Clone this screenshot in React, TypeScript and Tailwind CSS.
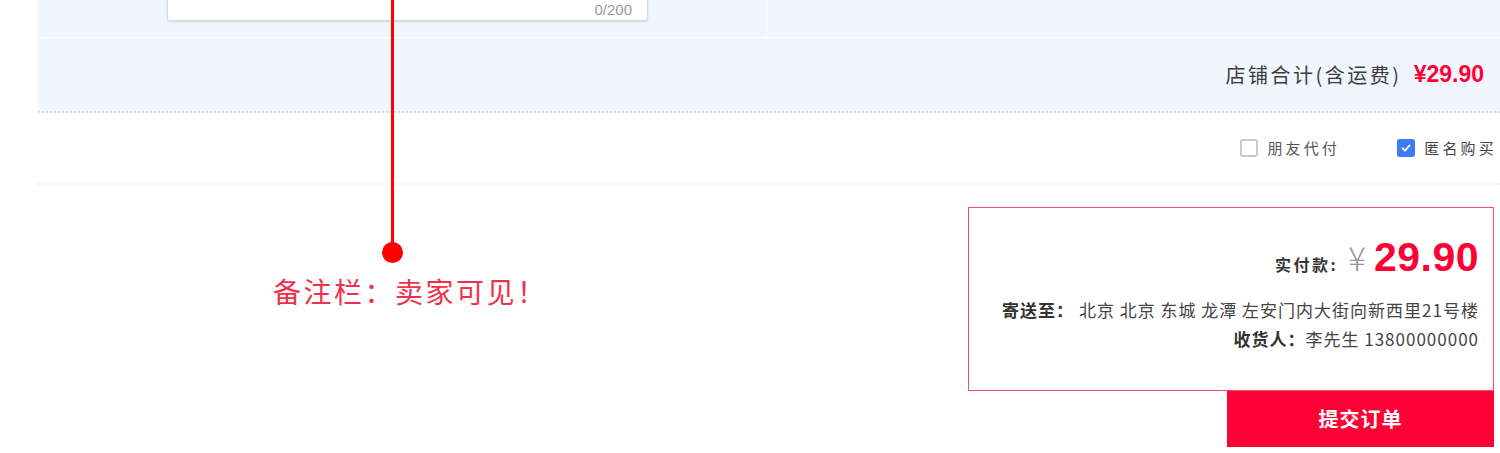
import React from "react";

const cjk = { fontFamily: '"Noto Sans CJK SC", "Noto Sans", sans-serif' };
const latin = { fontFamily: '"Liberation Sans", Arial, sans-serif' };

export default function App() {
  return (
    <div className="relative w-[1500px] h-[453px] overflow-hidden bg-white" style={cjk}>
      <div className="ml-[38px]">
        {/* top row with textarea (cut off at top) */}
        <div className="flex h-[37px] bg-[#f0f5fe] overflow-hidden">
          <div className="w-[729px] border-r border-[#fbfdff] flex items-end pb-[16px]">
            <div className="ml-[129px] w-[481px] h-[80px] bg-white border border-[#d9d9d9] rounded-[3px] shadow-[0_1px_2px_rgba(0,0,0,0.12)] flex items-end justify-end pr-[15px] pb-[3px]">
              <span className="text-[15px] text-[#9a9a9a] leading-none" style={latin}>0/200</span>
            </div>
          </div>
          <div className="flex-1" />
        </div>
        {/* shop total */}
        <div className="mt-[1px] h-[75px] bg-[#f0f5fe] border-b-2 border-dotted border-[#cfdcf3] flex items-center justify-end pr-[16px]">
          <span className="text-[20px] tracking-[2.5px] text-[#3c3c3c]">店铺合计(含运费)</span>
          <span className="ml-[12px] text-[23px] font-bold text-[#ff0036]" style={latin}>¥29.90</span>
        </div>
        {/* checkbox row */}
        <div className="h-[72px] border-b-2 border-dotted border-[#eeeeee] flex items-center justify-end pr-[3px]">
          <div className="flex items-center">
            <span className="w-[18px] h-[18px] rounded-[3px] border-2 border-[#c9c9c9] bg-white" />
            <span className="ml-[9px] text-[15px] tracking-[3.2px] text-[#555]">朋友代付</span>
          </div>
          <div className="flex items-center ml-[57px]">
            <span className="w-[18px] h-[18px] rounded-[3px] bg-[#3d7cf5] flex items-center justify-center">
              <svg width="12" height="12" viewBox="0 0 12 12">
                <path d="M2.5 6.2 L5 8.6 L9.6 3.4" fill="none" stroke="#fff" strokeWidth="1.8" strokeLinecap="round" strokeLinejoin="round" />
              </svg>
            </span>
            <span className="ml-[9px] text-[15px] tracking-[3.2px] text-[#444]">匿名购买</span>
          </div>
        </div>
        {/* pay box */}
        <div className="flex justify-end pr-[6px] pt-[22px]">
          <div className="flex flex-col items-end">
            <div className="w-[526px] h-[184px] border border-[#f2506a] flex flex-col items-end pr-[14px] pt-[29px]">
              <div className="flex items-baseline">
                <span className="text-[16px] font-bold tracking-[2.5px] text-[#333]">实付款:</span>
                <span className="ml-[10px] text-[33px] font-light text-[#999] leading-none">¥</span>
                <span className="ml-[8px] text-[41px] font-bold text-[#ff0036] tracking-[0.5px] leading-none" style={latin}>29.90</span>
              </div>
              <div className="mt-[17px] text-[17px] tracking-[1px] text-[#444] leading-[29px]">
                <span className="font-bold text-[#333]">寄送至：</span> 北京 北京 东城 龙潭 左安门内大街向新西里21号楼
              </div>
              <div className="text-[17px] tracking-[1px] text-[#444] leading-[29px]">
                <span className="font-bold text-[#333]">收货人：</span>李先生 13800000000
              </div>
            </div>
            <button className="w-[267px] h-[56px] bg-[#ff0036] text-white text-[20px] font-bold tracking-[1px]">提交订单</button>
          </div>
        </div>
      </div>

      {/* annotation overlay */}
      <div className="absolute left-[391px] top-0 w-[3px] h-[252px] bg-[#ff0000]" />
      <div className="absolute left-[382px] top-[242px] w-[21px] h-[21px] rounded-full bg-[#ff0000]" />
      <div className="absolute left-[273px] top-[277px] text-[28px] tracking-[2.5px] text-[#f3304c] leading-none whitespace-nowrap">
        备注栏：卖家可见！
      </div>
    </div>
  );
}
